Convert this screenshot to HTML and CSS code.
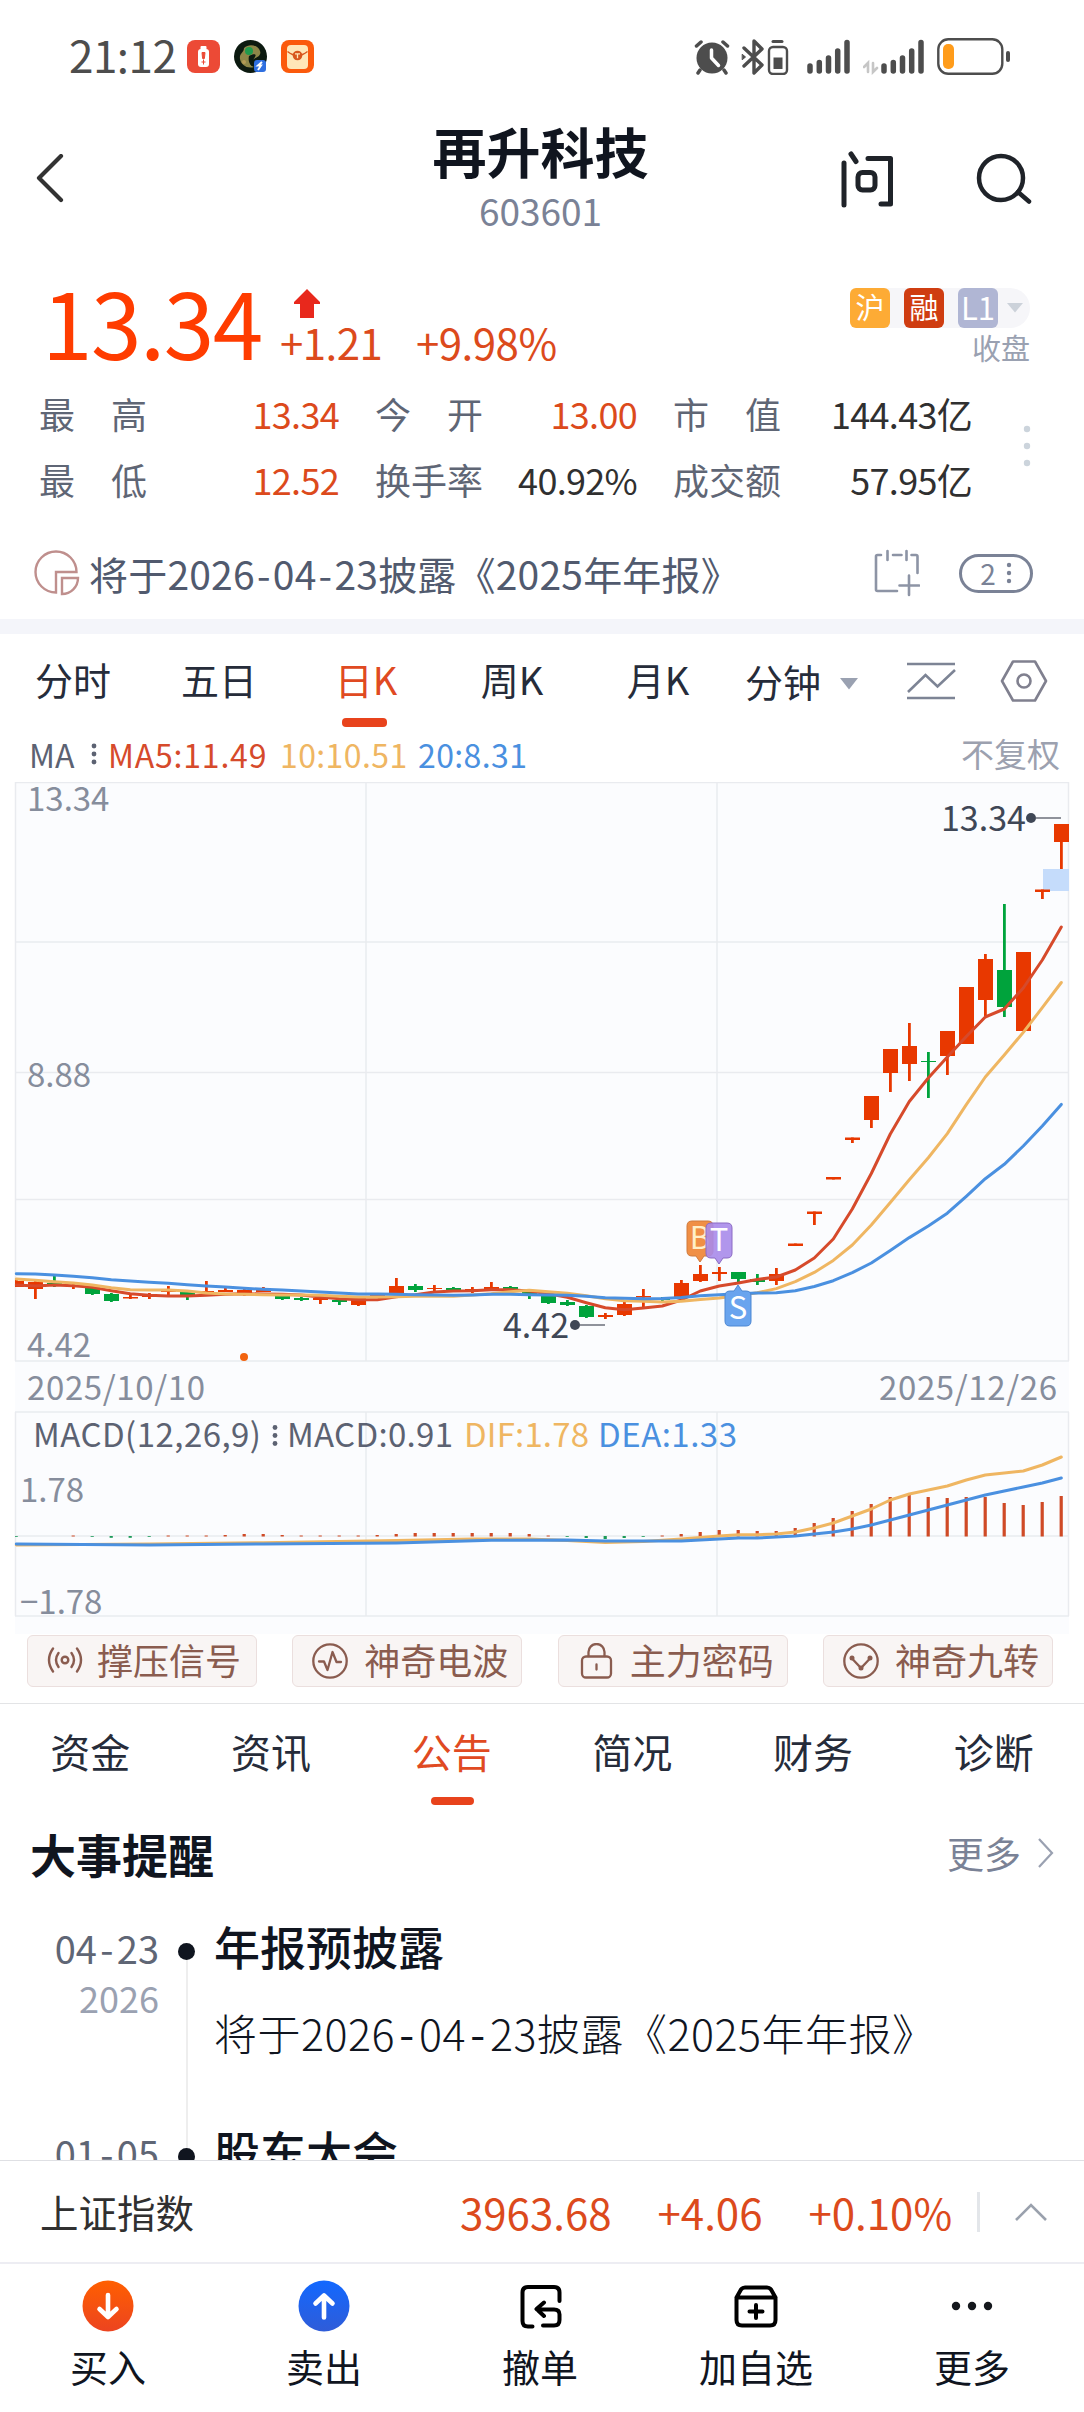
FILE: index.html
```html
<!DOCTYPE html>
<html lang="zh-CN">
<head>
  <meta charset="UTF-8">
  <title>再升科技 603601</title>
  <link rel="stylesheet" href="styles.css">
</head>
<body>
  <div class="status">
    <span class="time">21:12</span>
    <svg class="app-icon" width="33" height="33" viewBox="0 0 33 33">
      <rect width="33" height="33" rx="8" fill="#ec4a36"/>
      <rect x="13.500" y="6" width="6" height="4" rx="1" fill="#fff"/>
      <rect x="11" y="9" width="11" height="18" rx="3" fill="#fff"/>
      <path d="M15 12.500h3l-.6 6h-1.800zM16.500 19.500v5M14.500 22h4" fill="#ec4a36" stroke="#ec4a36" stroke-width="1"/>
    </svg>
    <svg class="app-icon" width="33" height="33" viewBox="0 0 33 33">
      <circle cx="16.500" cy="16.500" r="16.500" fill="#0c1a10"/>
      <path d="M10 8c5-5 14-3 16 3 2 5-5 7-8 9s-2 6 2 7c-7 2-13-2-14-8s4-6 4-11z" fill="#8d8748"/>
      <path d="M15 16c5-3 8-2 6 1s-4 5-3 9c-3-2-4-6-3-10z" fill="#0c1a10"/>
      <circle cx="15" cy="11" r="4" fill="#1f9a4c"/>
      <circle cx="10" cy="22" r="2" fill="#b39a55"/>
      <rect x="20" y="20" width="12" height="12" rx="3" fill="#2f6fe0"/>
      <path d="M28 22l-4 3.500h3L24 30" fill="none" stroke="#fff" stroke-width="2"/>
    </svg>
    <svg class="app-icon" width="33" height="33" viewBox="0 0 33 33">
      <rect width="33" height="33" rx="8" fill="#fb5a0c"/>
      <rect x="6" y="5" width="21" height="24" rx="4" fill="#ffe7b8"/>
      <path d="M6.500 11.500q10 8 20 0" fill="none" stroke="#d8561c" stroke-width="1.500"/>
      <circle cx="16.500" cy="15.500" r="4.800" fill="#d8561c"/>
      <path d="M14 13.800h5M16.500 13.800v4.500" stroke="#ffe7b8" stroke-width="1.300"/>
    </svg>

    <div class="status-right">
      <svg width="36" height="36" viewBox="0 0 36 36">
        <circle cx="18" cy="19" r="15.500" fill="#4d4d4d"/>
        <path d="M2.500 7L7 3M33.500 7L29 3M6 31l-2 3M30 31l2 3" stroke="#4d4d4d" stroke-width="3.500" stroke-linecap="round"/>
        <path d="M17.500 11v8l7 7.500" fill="none" stroke="#fff" stroke-width="3.500" stroke-linecap="round" stroke-linejoin="round"/>
      </svg>
      <svg class="bt" width="48" height="36" viewBox="0 0 48 36" fill="none" stroke="#4d4d4d" stroke-linecap="round">
        <path d="M3 9l18 17-8 8V2l8 8L3 27" stroke-width="3.400" stroke-linejoin="round"/>
        <path d="M1.500 15.500l3 2.500-3 2.500z" fill="#4d4d4d" stroke-width="1"/>
        <rect x="28" y="8" width="18" height="27" rx="4" stroke-width="2.400"/>
        <path d="M32 2.500h9" stroke-width="3"/>
        <rect x="33" y="19" width="8" height="10.500" fill="#4d4d4d" stroke-width="1"/>
      </svg>
      <svg class="sig1" width="44" height="36" viewBox="0 0 44 36" stroke="#4d4d4d" stroke-width="5.500" stroke-linecap="round">
        <path d="M3 27v5M12.300 23.500v8.500M21.500 19v13M30.700 12v20M40 3.500v28.500"/>
      </svg>
      <svg class="sig2" width="62" height="36" viewBox="0 0 62 36" stroke="#4d4d4d" stroke-width="5.500" stroke-linecap="round">
        <path d="M21 27v5M30.300 23.500v8.500M39.500 19v13M48.700 12v20M58 3.500v28.500"/>
        <path d="M1 28l4-4v9M10 24v9l4-4" fill="none" stroke="#c6c6c6" stroke-width="2.600"/>
      </svg>
      <svg class="battery" width="74" height="38" viewBox="0 0 74 38">
        <rect x="1.300" y="1.300" width="64" height="34.500" rx="10" fill="none" stroke="#4d4d4d" stroke-width="2.400"/>
        <rect x="6" y="6" width="11" height="25" rx="5" fill="#ff9c1b"/>
        <rect x="69" y="13" width="4" height="11" rx="2" fill="#4d4d4d"/>
      </svg>
    </div>
  </div>

  <header class="header">
    <svg class="back" width="30" height="50" viewBox="0 0 30 50" fill="none" stroke="#333" stroke-width="4.200" stroke-linecap="round" stroke-linejoin="round">
      <path d="M26 2L4 24l22 22"/>
    </svg>
    <div class="title">
      <h1>再升科技</h1>
      <span>603601</span>
    </div>
    <svg class="ask" width="54" height="58" viewBox="0 0 54 58" fill="none" stroke="#1f2329" stroke-width="5" stroke-linecap="round" stroke-linejoin="round">
      <path d="M4 13v42M11 4l5 7.500M28 8.500h22.500V54H41"/>
      <rect x="18" y="22.500" width="17" height="17.500" rx="4.500"/>
    </svg>
    <svg class="search" width="56" height="52" viewBox="0 0 56 52" fill="none" stroke="#1f2329" stroke-width="4.500" stroke-linecap="round">
      <circle cx="25" cy="25" r="22"/>
      <path d="M42 39l11 9.500"/>
    </svg>
  </header>

  <section class="quote">
    <div class="quote-top">
      <span class="price">13.34</span>
      <div class="change">
        <svg width="26" height="30" viewBox="0 0 26 30">
          <path d="M13 0l13 13v2h-6v14H6V15H0v-2z" fill="#e8281c"/>
        </svg>
        <div><span class="diff">+1.21</span><span>+9.98%</span></div>
      </div>
      <div class="tags">
        <div class="tag-row">
          <b class="tag sh">沪</b>
          <b class="tag rz">融</b>
          <b class="tag lv">L1</b>
          <svg width="18" height="10" viewBox="0 0 18 10"><path d="M1 0h16L9 9.500z" fill="#ccd2da"/></svg>
        </div>
        <span class="closed">收盘</span>
      </div>
    </div>
    <div class="stats">
      <div class="stat"><label>最高</label><b class="up">13.34</b></div>
      <div class="stat"><label>今开</label><b class="up">13.00</b></div>
      <div class="stat"><label>市值</label><b>144.43亿</b></div>
      <div class="stat"><label>最低</label><b class="up">12.52</b></div>
      <div class="stat"><label>换手率</label><b>40.92%</b></div>
      <div class="stat"><label>成交额</label><b>57.95亿</b></div>
      <svg class="stats-more" width="8" height="42" viewBox="0 0 8 42" fill="#ccd4dc">
        <circle cx="4" cy="4" r="3.200"/><circle cx="4" cy="21" r="3.200"/><circle cx="4" cy="38" r="3.200"/>
      </svg>
    </div>
    <div class="notice">
      <svg width="46" height="46" viewBox="0 0 46 46" fill="none" stroke="#bf8f8d" stroke-width="2.400">
        <path d="M42.500 22A20.500 20.500 0 1 0 22 42.500V22z"/>
        <path d="M28 28h16a16 16 0 0 1-16 16z"/>
      </svg>
      <span class="notice-text">将于2026<i>-</i>04<i>-</i>23披露《2025年年报》</span>
      <svg class="cal" width="46" height="48" viewBox="0 0 46 48" fill="none" stroke="#8d94a5" stroke-width="2.600" stroke-linecap="round">
        <path d="M7 6H3.500q-1.500 0-1.500 1.500v33q0 1.500 1.500 1.500H23M13.500 2v9M19 6h8.500M32.500 2v9M37.500 6H42q1.500 0 1.500 1.500V24M35 26.500V46M25.500 36.500H45"/>
      </svg>
      <span class="count">2<svg width="6" height="22" viewBox="0 0 6 22" fill="#7a8296"><circle cx="3" cy="3" r="2.200"/><circle cx="3" cy="11" r="2.200"/><circle cx="3" cy="19" r="2.200"/></svg></span>
    </div>
  </section>

  <nav class="period">
    <a>分时</a>
    <a>五日</a>
    <a class="active">日K</a>
    <a>周K</a>
    <a>月K</a>
    <a class="minute">分钟<svg width="20" height="12" viewBox="0 0 20 12"><path d="M1 0h18l-9 11.500z" fill="#9aa1b1"/></svg></a>
    <svg class="line-icon" width="50" height="40" viewBox="0 0 50 40" fill="none" stroke="#7d8495" stroke-width="2.600">
      <path d="M1 3h48M1 37h48M2 31l17.500-17 12 11.500L49 9"/>
    </svg>
    <svg class="set-icon" width="48" height="44" viewBox="0 0 48 44" fill="none" stroke="#80808f" stroke-width="2.600" stroke-linejoin="round">
      <path d="M13 2.500h22L46 22 35 41.500H13L2 22z"/>
      <circle cx="24" cy="22" r="6.500"/>
    </svg>
  </nav>

  <div class="ma">
    <span class="ma-name">MA</span>
    <svg width="6" height="24" viewBox="0 0 6 24" fill="#5c6272"><circle cx="3" cy="4" r="2.400"/><circle cx="3" cy="12" r="2.400"/><circle cx="3" cy="20" r="2.400"/></svg>
    <span class="ma5">MA5:11.49</span>
    <span class="ma10">10:10.51</span>
    <span class="ma20">20:8.31</span>
    <span class="adjust">不复权</span>
  </div>

  <svg class="chart" id="chart" width="1084" height="852" viewBox="0 782 1084 852">
    <rect x="15" y="782" width="1054" height="852" fill="#fbfcfe"/>
    <path class="grid" d="M15 782.500H1069M15 942H1069M15 1072.500H1069M15 1199.500H1069M15 1361H1069M15 1412H1069M15 1536H1069M15 1616H1069M15.500 782V1361M366 782V1361M717 782V1361M1068.500 782V1361M15.500 1412V1616M366 1412V1616M717 1412V1616M1068.500 1412V1616"/>
    <rect x="1043" y="869" width="26" height="22" fill="#c5dcfb"/>

    <g id="candles"></g>
    <g id="lines"></g>

    <g class="axis">
      <text x="27" y="811">13.34</text>
      <text x="27" y="1087">8.88</text>
      <text x="27" y="1357">4.42</text>
      <text x="27" y="1400" textLength="178">2025/10/10</text>
      <text x="879" y="1400" textLength="178">2025/12/26</text>
      <text x="20" y="1502">1.78</text>
      <text x="20" y="1614">−1.78</text>
    </g>

    <g class="peak">
      <text x="941" y="831">13.34</text>
      <circle cx="1031" cy="818" r="5"/>
      <path d="M1036 818h25"/>
      <text x="503" y="1338">4.42</text>
      <circle cx="575" cy="1325" r="5"/>
      <path d="M580 1325h25"/>
    </g>
    <circle cx="244" cy="1357" r="4" fill="#f2630f"/>

    <g class="marker">
      <path d="M692 1221h16q5 0 5 5v25q0 5-5 5h-4l-4 6-4-6h-4q-5 0-5-5v-25q0-5 5-5z" fill="#f08f45" stroke="#cf7a3c"/>
      <text x="700" y="1249" fill="#ffefc8">B</text>
      <path d="M711 1223h16q5 0 5 5v25q0 5-5 5h-4l-4 6-4-6h-4q-5 0-5-5v-25q0-5 5-5z" fill="#a98bea" fill-opacity=".9" stroke="#8b6ac4"/>
      <text x="719" y="1251" fill="#fff">T</text>
      <path d="M730 1326h16q5 0 5-5v-25q0-5-5-5h-4l-4-6-4 6h-4q-5 0-5 5v25q0 5 5 5z" fill="#69a4ee" stroke="#4c87d3"/>
      <text x="738" y="1319" fill="#fff">S</text>
    </g>

    <g class="macd-text">
      <text x="33" y="1447" textLength="228">MACD(12,26,9)</text>
      <circle cx="275" cy="1427.500" r="2.400"/><circle cx="275" cy="1435.500" r="2.400"/><circle cx="275" cy="1443.500" r="2.400"/>
      <text x="287" y="1447" textLength="166">MACD:0.91</text>
      <text x="464" y="1447" textLength="125" fill="#efb662">DIF:1.78</text>
      <text x="598" y="1447" textLength="139" fill="#4a90e0">DEA:1.33</text>
    </g>
  </svg>

  <div class="signals">
    <a class="signal">
      <svg width="36" height="36" viewBox="0 0 36 36" fill="none" stroke="#8a5c4f" stroke-width="2.400" stroke-linecap="round">
        <circle cx="18" cy="17" r="3.300"/>
        <path d="M11.500 10q-5 7 0 14M24.500 10q5 7 0 14M6 5.500q-8 11.500 0 23M30 5.500q8 11.500 0 23"/>
      </svg><span>撑压信号</span>
    </a>
    <a class="signal">
      <svg width="36" height="36" viewBox="0 0 36 36" fill="none" stroke="#8a5c4f" stroke-width="2.300" stroke-linecap="round" stroke-linejoin="round">
        <circle cx="18" cy="18" r="16.700"/>
        <path d="M7 18.500h5l3.500 8.500 5-18 4 10H29"/>
      </svg><span>神奇电波</span>
    </a>
    <a class="signal">
      <svg width="36" height="36" viewBox="0 0 36 36" fill="none" stroke="#8a5c4f" stroke-width="2.300" stroke-linecap="round">
        <rect x="4" y="13.500" width="29" height="21" rx="4"/>
        <path d="M10.500 13v-4a8 8 0 0 1 16 0v4M18.500 21.500v5"/>
      </svg><span>主力密码</span>
    </a>
    <a class="signal">
      <svg width="36" height="36" viewBox="0 0 36 36" fill="none" stroke="#8a5c4f" stroke-width="2.300">
        <circle cx="18" cy="18" r="16.700"/>
        <path d="M9 15.500l9 9.500 9-9.500"/>
        <g fill="#8a5c4f" stroke="none"><circle cx="9" cy="15" r="2.500"/><circle cx="18" cy="25" r="2.500"/><circle cx="27" cy="15" r="2.500"/></g>
      </svg><span>神奇九转</span>
    </a>
  </div>

  <nav class="tabs">
    <a>资金</a>
    <a>资讯</a>
    <a class="active">公告</a>
    <a>简况</a>
    <a>财务</a>
    <a>诊断</a>
  </nav>

  <section class="events">
    <div class="events-head">
      <h2>大事提醒</h2>
      <a>更多</a>
      <svg width="18" height="32" viewBox="0 0 18 32" fill="none" stroke="#9aa1b1" stroke-width="2.200"><path d="M2 2l13 14L2 30"/></svg>
    </div>
    <div class="event">
      <div class="date">04<i>-</i>23<small>2026</small></div>
      <div class="rail"></div>
      <div class="info">
        <h3>年报预披露</h3>
        <p>将于2026<i>-</i>04<i>-</i>23披露《2025年年报》</p>
      </div>
    </div>
    <div class="event">
      <div class="date">01<i>-</i>05<small>2026</small></div>
      <div class="rail"></div>
      <div class="info">
        <h3>股东大会</h3>
      </div>
    </div>
  </section>

  <div class="index-bar">
    <span class="index-name">上证指数</span>
    <div class="index-vals">
      <span>3963.68</span>
      <span>+4.06</span>
      <span>+0.10%</span>
    </div>
    <svg width="34" height="20" viewBox="0 0 34 20" fill="none" stroke="#9aa1ad" stroke-width="2.600"><path d="M2 18L17 3l15 15"/></svg>
  </div>

  <nav class="bottom">
    <a>
      <svg width="52" height="52" viewBox="0 0 52 52">
        <defs><linearGradient id="buy" x2="0" y2="1"><stop offset="0" stop-color="#ff5f00"/><stop offset="1" stop-color="#ec4420"/></linearGradient></defs>
        <circle cx="26" cy="26" r="25.500" fill="url(#buy)"/>
        <path d="M26 15v21M17.500 29l8.500 8 8.500-8" fill="none" stroke="#fff" stroke-width="4.600" stroke-linecap="round" stroke-linejoin="round"/>
      </svg>买入
    </a>
    <a>
      <svg width="52" height="52" viewBox="0 0 52 52">
        <defs><linearGradient id="sell" x2="0" y2="1"><stop offset="0" stop-color="#1268ff"/><stop offset="1" stop-color="#2f5cd8"/></linearGradient></defs>
        <circle cx="26" cy="26" r="25.500" fill="url(#sell)"/>
        <path d="M26 37.500V16M17.500 23.500l8.500-8 8.500 8" fill="none" stroke="#fff" stroke-width="4.600" stroke-linecap="round" stroke-linejoin="round"/>
      </svg>卖出
    </a>
    <a>
      <svg width="52" height="52" viewBox="0 0 52 52" fill="none" stroke="#000" stroke-width="4" stroke-linecap="round" stroke-linejoin="round">
        <path d="M18.500 46.500H14q-5.500 0-5.500-5.500V12.500Q8.500 7 14 7h26q5.500 0 5.500 5.500V21M30 22.500l-7.500 6.500 7.500 7M23 29.500h17q5.500 0 5.500 5v5.500q0 5.500-5.500 5.500H29"/>
      </svg>撤单
    </a>
    <a>
      <svg width="52" height="52" viewBox="0 0 52 52" fill="none" stroke="#000" stroke-width="4" stroke-linecap="round" stroke-linejoin="round">
        <path d="M6.500 17.500h39V40q0 5.500-5.500 5.500H12q-5.500 0-5.500-5.500zl4.500-8Q12.500 7.500 15 7.500h22q2.500 0 4 2l4.500 8M26 25v13M19.500 31.500h13"/>
      </svg>加自选
    </a>
    <a>
      <svg width="52" height="52" viewBox="0 0 52 52" fill="#14171c"><circle cx="10" cy="26" r="4.200"/><circle cx="26" cy="26" r="4.200"/><circle cx="42" cy="26" r="4.200"/></svg>更多
    </a>
  </nav>

  <script src="chart.js"></script>
</body>
</html>
```
FILE: styles.css
```css
* {
  box-sizing: border-box;
}
body {
  margin: 0;
  width: 1084px;
  height: 2412px;
  overflow: hidden;
  display: flex;
  flex-direction: column;
  background: #fff;
  color: #10151f;
  font-family: "Noto Sans CJK SC", "Noto Sans", sans-serif;
  line-height: 1;
}
svg {
  display: block;
  flex: none;
}
h1, h2, h3, p {
  margin: 0;
}
b, i {
  font-weight: normal;
  font-style: normal;
}

/* status bar */
.status {
  height: 113px;
  display: flex;
  align-items: center;
  padding-left: 69px;
}
.time {
  width: 118px;
  padding-bottom: 5px;
  font-size: 44px;
  letter-spacing: -0.5px;
  color: #4d4d4d;
}
.app-icon {
  margin-right: 14px;
}
.status-right {
  display: flex;
  align-items: center;
  margin-left: auto;
  margin-right: 73px;
}
.bt {
  margin-left: 11px;
}
.sig1 {
  margin-left: 18px;
}
.sig2 {
  margin-left: 12px;
}
.battery {
  margin-left: 12px;
}

/* header */
.header {
  height: 134px;
  display: flex;
  align-items: center;
  padding: 0 52px 2px 35px;
}
.title {
  flex: 1;
  margin-left: 176px;
  padding-bottom: 6px;
  text-align: center;
}
.title h1 {
  font-size: 54px;
  font-weight: 700;
}
.title span {
  display: block;
  margin-top: 14px;
  font-size: 37px;
  color: #7a8296;
}
.ask {
  margin-right: 82px;
}

/* quote */
.quote {
  height: 387px;
  border-bottom: 15px solid #f4f5fa;
}
.quote-top {
  height: 119px;
  display: flex;
  align-items: flex-end;
  padding-left: 42px;
}
.price {
  width: 238px;
  font-size: 91px;
  letter-spacing: -1.5px;
  color: #ff3c00;
}
.change {
  margin-bottom: 3px;
  font-size: 42px;
  letter-spacing: -0.5px;
  color: #dc4a1c;
}
.change svg {
  margin: 0 0 2px 14px;
}
.diff {
  display: inline-block;
  width: 136px;
}
.tags {
  margin-left: auto;
  margin-right: 54px;
  align-self: stretch;
  padding-top: 41px;
  text-align: right;
}
.tag-row {
  display: flex;
  align-items: center;
  gap: 14px;
  height: 40px;
  padding-right: 6px;
  border-radius: 8px 20px 20px 8px;
  background: #f6f6f9;
}
.tag-row svg {
  margin-left: -6px;
}
.tag {
  width: 40px;
  height: 40px;
  border-radius: 6px;
  font-size: 29px;
  line-height: 37px;
  text-align: center;
  color: #fff;
}
.sh {
  background: #fdab35;
}
.rz {
  background: #cf3d11;
}
.lv {
  background: #b0b6d4;
  font-size: 31px;
}
.closed {
  display: block;
  margin-top: 5px;
  font-size: 29px;
  color: #9aa1b1;
}
.stats {
  position: relative;
  margin-top: 14px;
  padding-left: 39px;
  display: grid;
  grid-template-columns: 300px 262px 299px;
  grid-auto-rows: 66px;
  column-gap: 36px;
}
.stat {
  display: flex;
  align-items: center;
  justify-content: space-between;
  font-size: 36px;
  color: #303030;
}
.stat b {
  letter-spacing: -0.7px;
}
.stat label {
  width: 108px;
  white-space: nowrap;
  color: #5f6675;
  text-align-last: justify;
}
.stat .up {
  color: #dc4a1c;
}
.stats-more {
  position: absolute;
  left: 1023px;
  top: 45px;
}
.notice {
  display: flex;
  align-items: center;
  height: 107px;
  padding: 15px 51px 0 34px;
  font-size: 39px;
  color: #515a6e;
}
.notice-text {
  margin-left: 9px;
  letter-spacing: 0.2px;
}
.notice-text i {
  display: inline-block;
  width: 18px;
  text-align: center;
}
.cal {
  margin-left: auto;
  margin-right: 39px;
}
.count {
  width: 74px;
  height: 39px;
  display: flex;
  align-items: center;
  justify-content: center;
  gap: 10px;
  border: 3px solid #7a8296;
  border-radius: 20px;
  font-size: 28px;
  color: #7a8296;
}

/* period tabs */
.period {
  height: 94px;
  display: flex;
  align-items: center;
  font-size: 38px;
  color: #262c3a;
}
.period a {
  position: relative;
  width: 146px;
  height: 94px;
  line-height: 90px;
  text-align: center;
}
.period a:nth-child(n+3) {
  left: 1px;
}
.period .minute {
  display: flex;
  align-items: center;
  gap: 18px;
  margin-left: 14px;
  width: 160px;
}
.minute svg {
  margin-top: 6px;
}
.line-icon {
  margin-left: 2px;
}
.set-icon {
  margin-left: 44px;
}
.period .active, .tabs .active {
  color: #e04a22;
}
.active::after {
  content: "";
  position: absolute;
  left: 50%;
  bottom: 1px;
  width: 45px;
  height: 9px;
  margin-left: -24px;
  border-radius: 4px;
  background: #e8431c;
}

.ma {
  height: 54px;
  display: flex;
  align-items: center;
  padding: 0 24px 3px 29px;
  font-size: 32px;
  color: #5c6272;
}
.ma-name {
  width: 62px;
}
.ma5 {
  margin-left: 11px;
  width: 172px;
  letter-spacing: 0.8px;
  color: #d64a2b;
}
.ma10 {
  width: 138px;
  letter-spacing: 0.4px;
  color: #efb662;
}
.ma20 {
  letter-spacing: 0.4px;
  color: #4a90e0;
}
.adjust {
  margin-left: auto;
  font-size: 33px;
  color: #9ca1af;
}

/* chart */
.grid {
  fill: none;
  stroke: #e9ebef;
  stroke-width: 1.5;
}
.chart text {
  font-size: 33px;
}
.axis {
  fill: #868d9c;
}
.chart .peak {
  fill: #3f4756;
}
.chart .peak text {
  font-size: 34px;
}
.peak path {
  stroke: #8f929b;
  stroke-width: 2;
}
.chart .marker text {
  font-size: 31px;
  text-anchor: middle;
}
.macd-text {
  fill: #5c6272;
}
.line {
  fill: none;
  stroke-width: 3;
  stroke-linejoin: round;
  stroke-linecap: round;
}

.signals {
  height: 70px;
  padding: 1px 31px 0 27px;
  display: flex;
  justify-content: space-between;
  border-bottom: 1px solid #e3e4e6;
}
.signal {
  width: 230px;
  height: 52px;
  display: flex;
  align-items: center;
  gap: 16px;
  padding-left: 19px;
  border: 1px solid #ebdfde;
  border-radius: 6px;
  background: #f9f5f4;
  font-size: 36px;
  color: #8a5c4f;
}
.signal span {
  padding-bottom: 4px;
}
.signal:first-child {
  gap: 14px;
}

/* content tabs */
.tabs {
  height: 102px;
  display: grid;
  grid-template-columns: repeat(6, 1fr);
  font-size: 40px;
  line-height: 94px;
  text-align: center;
  color: #262c3a;
}
.tabs a {
  position: relative;
}
.tabs .active::after {
  height: 8px;
  margin-left: -21px;
  width: 43px;
}

.events {
  height: 354px;
  overflow: hidden;
}
.events-head {
  height: 96px;
  display: flex;
  align-items: center;
  padding: 0 29px 2px 30px;
}
.events-head h2 {
  font-size: 46px;
  font-weight: 700;
}
.events-head a {
  margin-left: auto;
  margin-right: 16px;
  font-size: 37px;
  color: #7a8296;
}
.event {
  height: 205px;
  display: flex;
}
.date {
  width: 159px;
  padding-top: 27px;
  text-align: right;
  font-size: 38px;
  color: #5f6675;
}
.date small {
  display: block;
  margin-top: 12px;
  font-size: 36px;
  color: #9aa1b1;
}
.date i {
  display: inline-block;
  width: 20px;
  text-align: center;
}
.rail {
  width: 17px;
  margin: 41px 0 -41px 19px;
  background: linear-gradient(#eee, #eee) center / 2px 100% no-repeat;
}
.rail::before {
  content: "";
  display: block;
  height: 17px;
  border-radius: 50%;
  background: #10151f;
}
.info {
  margin-left: 19px;
  padding-top: 20px;
}
.info h3 {
  font-size: 46px;
  font-weight: 500;
}
.info p {
  margin-top: 43px;
  font-size: 43px;
  font-weight: 300;
  letter-spacing: 0.5px;
}
.info i {
  display: inline-block;
  width: 24px;
  text-align: center;
}

/* market index */
.index-bar {
  height: 104px;
  display: flex;
  align-items: center;
  padding-left: 40px;
  border-top: 1px solid #dfe0e4;
  border-bottom: 2px solid #ededf3;
}
.index-name {
  width: 420px;
  font-size: 38.5px;
  color: #303030;
}
.index-vals {
  width: 520px;
  height: 40px;
  display: flex;
  align-items: center;
  gap: 46px;
  border-right: 3px solid #e3e6ea;
  font-size: 42px;
  color: #dc4a1c;
}
.index-bar svg {
  margin-left: auto;
  margin-right: 36px;
}

.bottom {
  height: 148px;
  display: flex;
}
.bottom a {
  width: 216px;
  display: flex;
  flex-direction: column;
  align-items: center;
  gap: 15px;
  padding-top: 16px;
  font-size: 38px;
}
```
FILE: chart.js
```js
const NS = 'http://www.w3.org/2000/svg';
const RED = '#e83800';
const GREEN = '#00a33c';

// newest day first: [colour, high, body top, body bottom, low]
const candles = [
  ['r', 824, 824, 842, 869], ['r', 889.5, 889.5, 892, 899], ['r', 952, 952, 1031, 1031],
  ['g', 904, 970, 1007, 1017], ['r', 954, 959, 1000, 1016], ['r', 987, 987, 1044, 1044],
  ['r', 1031, 1031, 1056, 1075], ['g', 1052, 1061, 1062, 1098], ['r', 1023, 1046, 1064, 1081],
  ['r', 1049, 1049, 1073, 1092], ['r', 1096, 1096, 1120, 1128], ['r', 1137.5, 1137.5, 1140, 1143],
  ['r', 1177, 1177, 1179.5, 1179.5], ['r', 1211.5, 1211.5, 1214, 1225], ['r', 1243.5, 1243.5, 1246, 1246],
  ['r', 1268, 1274, 1281, 1285], ['g', 1274, 1279, 1282, 1285], ['g', 1272, 1272, 1279, 1283],
  ['r', 1267, 1272, 1274, 1281], ['r', 1265, 1274, 1281, 1282], ['r', 1280, 1283, 1297, 1297],
  ['g', 1297, 1298, 1300, 1301], ['r', 1289, 1296, 1297.5, 1308], ['r', 1302, 1304, 1315, 1316],
  ['r', 1313, 1315, 1317, 1319], ['g', 1305, 1306, 1317, 1318], ['g', 1300, 1302, 1305, 1306],
  ['g', 1295, 1296, 1303, 1304], ['g', 1290, 1290, 1295, 1299], ['g', 1286, 1287, 1289, 1290],
  ['r', 1282, 1287, 1290, 1290], ['r', 1287, 1289, 1291, 1293], ['g', 1287, 1288, 1292, 1292],
  ['r', 1285, 1288, 1289, 1292], ['g', 1284, 1286, 1290, 1292], ['r', 1278, 1286, 1293, 1293],
  ['r', 1294, 1295, 1297, 1297], ['r', 1298, 1298, 1305, 1306], ['g', 1299, 1300, 1302, 1305],
  ['r', 1298, 1298, 1300, 1304], ['g', 1297, 1298, 1300, 1301], ['g', 1294, 1295, 1299, 1300],
  ['r', 1287, 1290, 1292, 1292], ['r', 1289, 1290, 1295, 1296], ['r', 1288, 1290, 1292, 1292],
  ['r', 1281, 1291, 1292, 1293], ['g', 1291, 1292, 1297, 1300], ['r', 1286, 1290, 1292, 1296],
  ['r', 1293, 1296, 1297, 1299], ['r', 1294, 1297, 1298.5, 1299], ['g', 1293, 1294, 1301, 1302],
  ['g', 1286, 1287, 1294, 1295], ['r', 1284, 1285, 1287, 1289], ['g', 1276, 1283, 1284, 1287],
  ['r', 1281, 1282, 1289, 1299], ['r', 1278, 1281, 1287, 1287]
];

const ma5 = [927, 960, 988, 1009, 1017, 1036.5, 1057, 1078, 1101.5, 1134, 1173.5, 1209, 1239, 1258, 1270,
  1277, 1279.5, 1283, 1286, 1291, 1300, 1306, 1308, 1309.7, 1307.7, 1302.7, 1297.3, 1293.7, 1291, 1289.7,
  1289.7, 1290.7, 1291, 1292, 1294.7, 1296.7, 1299.7, 1299.7, 1298.7, 1297, 1295, 1294.3, 1294, 1293.7,
  1294.3, 1295.3, 1296, 1296, 1295.3, 1293.7, 1290.7, 1287.3, 1285.7, 1285, 1286, 1285];
const ma10 = [982.5, 1007.6, 1032.4, 1055, 1077, 1104.7, 1133.6, 1157.7, 1179.8, 1202.5, 1225, 1245, 1260.4,
  1272.4, 1281.7, 1288.6, 1292.7, 1295.5, 1298, 1299.6, 1301.3, 1302, 1301.3, 1300.7, 1298.7, 1295.7, 1293.3,
  1291.7, 1290.3, 1291.7, 1293.7, 1295, 1296.3, 1296.3, 1296.3, 1296.7, 1297, 1297, 1296.3, 1295.3, 1295,
  1295, 1294.7, 1294.3, 1294, 1293, 1291, 1290, 1290, 1289.7, 1287.7, 1285, 1283, 1281.7, 1280.3, 1279];
const ma20 = [1104.4, 1126, 1146, 1164.3, 1178.7, 1196.3, 1213.2, 1226, 1237.6, 1250.4, 1263, 1272.7, 1280.7,
  1286.5, 1290.7, 1292.7, 1293, 1293.8, 1294.8, 1295.8, 1297.5, 1298.6, 1298.8, 1298.3, 1297.7, 1296.3,
  1295.3, 1295, 1294.7, 1294.3, 1294.3, 1295, 1295.3, 1295, 1294.7, 1294.3, 1294, 1294, 1293, 1292, 1291,
  1290, 1289.3, 1288.3, 1287, 1286, 1284.7, 1283.3, 1282.3, 1281, 1279.7, 1277.7, 1276.3, 1275, 1274, 1273.7];

// bar ends; the zero axis is at 1536
const macd = [1496, 1502, 1505, 1503, 1497, 1497, 1498, 1497, 1495, 1497, 1504, 1511, 1518, 1523, 1528, 1531,
  1531, 1530, 1530, 1532, 1534, 1535.5, 1537.3, 1538.5, 1539.5, 1538.5, 1537.3, 1535.5, 1534, 1533, 1533,
  1533, 1533, 1533, 1533, 1534, 1535, 1535.5, 1535.5, 1535.5, 1535.5, 1535, 1534, 1534, 1535, 1535.5,
  1535.5, 1535.5, 1537.3, 1538.3, 1538.3, 1537.3, 1535.5, null, null, 1537.3];
const dif = [[0, 1457], [1, 1465], [2, 1471], [3, 1473], [4, 1475], [5, 1480], [6, 1486], [7, 1490], [8, 1494],
  [9, 1500], [10, 1509], [11, 1516], [12, 1523], [13, 1528], [14, 1532], [15, 1534], [16, 1534.7], [17, 1534.7],
  [18, 1536], [19, 1537.5], [20, 1539], [22, 1541.5], [24, 1542.5], [26, 1540.5], [28, 1539], [31, 1539],
  [35, 1540.5], [42, 1542.7], [48, 1544], [55, 1545]];
const dea = [[0, 1478], [1, 1483], [2, 1487], [3, 1491], [4, 1495], [5, 1500], [6, 1505], [7, 1510], [8, 1515],
  [9, 1520], [10, 1525], [11, 1529], [12, 1532], [13, 1534], [14, 1536], [15, 1537], [16, 1538], [17, 1538],
  [18, 1539], [20, 1541], [24, 1541], [26, 1540], [30, 1540.3], [35, 1543], [42, 1544], [48, 1545], [55, 1544]];

const candleBox = document.getElementById('candles');
const lineBox = document.getElementById('lines');
const xAt = i => 1061.3 - 19 * i;

function rect(x, y, w, h, fill) {
  // the oldest candle is cut by the left edge
  if (x < 15) {
    w -= 15 - x;
    x = 15;
  }
  const el = document.createElementNS(NS, 'rect');
  el.setAttribute('x', x);
  el.setAttribute('y', y);
  el.setAttribute('width', w);
  el.setAttribute('height', h);
  el.setAttribute('fill', fill);
  candleBox.appendChild(el);
}

function line(points, color) {
  const el = document.createElementNS(NS, 'polyline');
  el.setAttribute('class', 'line');
  el.setAttribute('points', points.map(p => `${xAt(p[0])},${p[1]}`).join(' '));
  el.setAttribute('stroke', color);
  lineBox.appendChild(el);
}

candles.forEach(([c, high, top, bottom, low], i) => {
  const x = xAt(i);
  const fill = c === 'r' ? RED : GREEN;
  rect(x - 1.3, high, 2.8, low - high, fill);
  rect(x - 7.3, top, 15, bottom - top, fill);
});

macd.forEach((y, i) => {
  if (y === null) return;
  const up = y < 1536.5;
  rect(xAt(i) - 1.7, up ? y : 1536, 3.2, Math.abs(1536.5 - y), up ? '#cf4a26' : '#1c9a58');
});

line(ma5.map((y, i) => [i, y]), '#d64a2b');
line(ma10.map((y, i) => [i, y]), '#efb662');
line(ma20.map((y, i) => [i, y]), '#4a90e0');
line(dif, '#efb662');
line(dea, '#4a90e0');
```
